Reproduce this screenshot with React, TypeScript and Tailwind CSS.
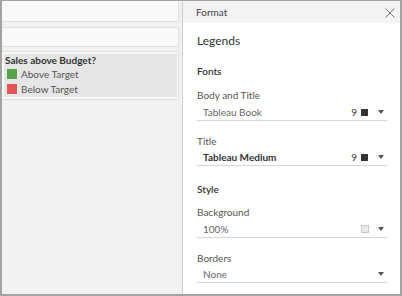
import React from "react";

function Arrow() {
  return (
    <svg width="6" height="4" viewBox="0 0 6 4" className="block">
      <path d="M0 0 L6 0 L3 4 Z" fill="#555" />
    </svg>
  );
}

function Dropdown({
  label,
  bold,
  size,
  swatch,
  mt,
}: {
  label: string;
  bold?: boolean;
  size?: string;
  swatch?: "dark" | "light";
  mt: string;
}) {
  return (
    <div className={`${mt} flex items-center h-[15px] pb-[2px] pl-[6px] pr-[3px] border-b border-[#d6d6d6] leading-[12px] text-[10px]`}>
      <span className={bold ? "flex-1 font-bold text-[#333]" : "flex-1 text-[#666]"}>{label}</span>
      {size && <span className="mr-[4px] text-[#333]">{size}</span>}
      <div className="w-[17px] flex items-center">
        {swatch === "dark" && <span className="block w-[7px] h-[7px] bg-[#333]" />}
        {swatch === "light" && (
          <span className="block w-[8px] h-[8px] bg-[#e9e9e9] border border-[#c8c8c8]" />
        )}
      </div>
      <Arrow />
    </div>
  );
}

export default function App() {
  return (
    <div className="w-[402px] h-[296px] box-border flex border-l-2 border-r-2 border-b-2 border-t border-[#a3a3a3] bg-[#f1f1f1] font-['Lato',sans-serif] overflow-hidden">
      {/* Left pane */}
      <div className="w-[180px] shrink-0 flex flex-col pr-[3px]">
        <div className="h-[21px] bg-[#f9f9f9] border-b border-r border-[#e1e1e1]" />
        <div className="mt-[5px] h-[20px] bg-[#f9f9f9] border-y border-r border-[#e1e1e1]" />
        <div className="mt-[4px] h-[49px] bg-[#f7f7f7] border-y border-r border-[#e1e1e1] pl-[2px] pr-[1px] py-[2px]">
          <div className="h-full bg-[#e6e6e6] pl-[1px]">
            <div className="text-[10px] leading-[12px] font-bold text-[#333]">Sales above Budget?</div>
            <div className="flex items-center h-[15px] pl-[2px]">
              <span className="block w-[10px] h-[10px] bg-[#59a14f]" />
              <span className="ml-[4px] text-[10px] leading-[12px] text-[#555]">Above Target</span>
            </div>
            <div className="flex items-center h-[15px] pl-[2px]">
              <span className="block w-[10px] h-[10px] bg-[#e15759]" />
              <span className="ml-[4px] text-[10px] leading-[12px] text-[#555]">Below Target</span>
            </div>
          </div>
        </div>
      </div>

      {/* Format panel */}
      <div className="flex-1 flex flex-col bg-white border-l border-[#cfcfcf]">
        <div className="h-[22px] shrink-0 bg-[#f3f3f3] flex items-center pl-[13px] pr-[5px]">
          <span className="flex-1 text-[10px] leading-[12px] text-[#444]">Format</span>
          <svg width="10" height="10" viewBox="0 0 10 10" className="block mt-[2px]">
            <path d="M0.5 0.5 L9.5 9.5 M9.5 0.5 L0.5 9.5" stroke="#777" strokeWidth="1" fill="none" />
          </svg>
        </div>
        <div className="flex flex-col pl-[14px] pr-[13px]">
          <div className="mt-[10px] text-[12px] leading-[16px] text-[#333]">Legends</div>
          <div className="mt-[16px] text-[10px] leading-[12px] font-semibold text-[#333]">Fonts</div>
          <div className="mt-[12px] text-[10px] leading-[12px] text-[#555]">Body and Title</div>
          <Dropdown mt="mt-[5px]" label="Tableau Book" size="9" swatch="dark" />
          <div className="mt-[14px] text-[10px] leading-[12px] text-[#555]">Title</div>
          <Dropdown mt="mt-[4px]" label="Tableau Medium" bold size="9" swatch="dark" />
          <div className="mt-[17px] text-[10px] leading-[12px] font-semibold text-[#333]">Style</div>
          <div className="mt-[11px] text-[10px] leading-[12px] text-[#555]">Background</div>
          <Dropdown mt="mt-[5px]" label="100%" swatch="light" />
          <div className="mt-[14px] text-[10px] leading-[12px] text-[#555]">Borders</div>
          <Dropdown mt="mt-[4px]" label="None" />
        </div>
      </div>
    </div>
  );
}
